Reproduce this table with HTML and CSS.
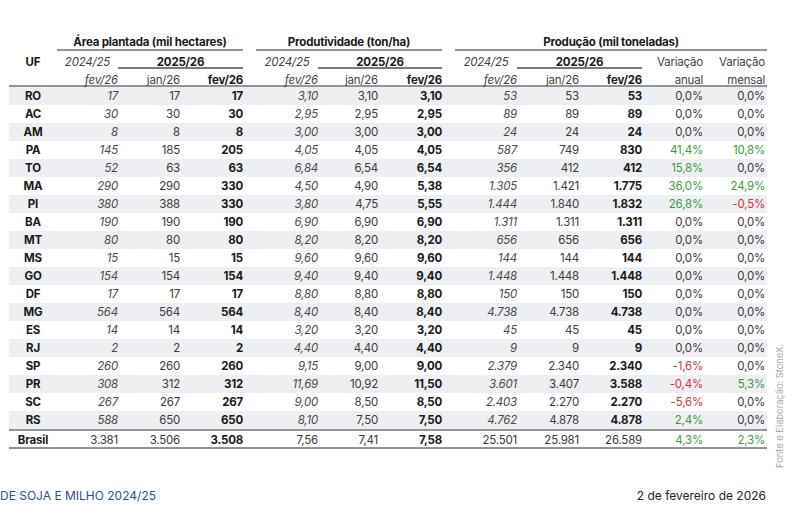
FILE: index.html
```html
<!DOCTYPE html>
<html lang="pt-BR">
<head>
<meta charset="utf-8">
<title>Soja - UF</title>
<link rel="stylesheet" href="styles.css">
</head>
<body>
<div class="page">
  <div class="main">
    <table class="tbl">
      <colgroup>
        <col class="c-uf"><col class="c-a1"><col class="c-a2"><col class="c-a3"><col class="c-gap">
        <col class="c-p1"><col class="c-p2"><col class="c-p3"><col class="c-gap">
        <col class="c-q1"><col class="c-q2"><col class="c-q3"><col class="c-v1"><col class="c-v2">
      </colgroup>
      <thead>
        <tr class="h1">
          <th></th>
          <th colspan="3" class="grp">Área plantada (mil hectares)</th>
          <th></th>
          <th colspan="3" class="grp">Produtividade (ton/ha)</th>
          <th></th>
          <th colspan="5" class="grp">Produção (mil toneladas)</th>
        </tr>
        <tr class="h2">
          <th class="uf">UF</th>
          <th class="it ctr">2024/25</th>
          <th colspan="2" class="yr">2025/26</th>
          <th></th>
          <th class="it ctr">2024/25</th>
          <th colspan="2" class="yr">2025/26</th>
          <th></th>
          <th class="it ctr">2024/25</th>
          <th colspan="2" class="yr">2025/26</th>
          <th class="reg">Variação</th>
          <th class="reg last">Variação</th>
        </tr>
        <tr class="h3">
          <th></th>
          <th class="it">fev/26</th><th class="reg">jan/26</th><th>fev/26</th><th></th>
          <th class="it">fev/26</th><th class="reg">jan/26</th><th>fev/26</th><th></th>
          <th class="it">fev/26</th><th class="reg">jan/26</th><th>fev/26</th>
          <th class="reg">anual</th><th class="reg last">mensal</th>
        </tr>
      </thead>
      <tbody>
        <tr class="s"><td class="uf">RO</td><td class="it">17</td><td>17</td><td class="b">17</td><td></td><td class="it">3,10</td><td>3,10</td><td class="b">3,10</td><td></td><td class="it">53</td><td>53</td><td class="b">53</td><td>0,0%</td><td class="last">0,0%</td></tr>
        <tr><td class="uf">AC</td><td class="it">30</td><td>30</td><td class="b">30</td><td></td><td class="it">2,95</td><td>2,95</td><td class="b">2,95</td><td></td><td class="it">89</td><td>89</td><td class="b">89</td><td>0,0%</td><td class="last">0,0%</td></tr>
        <tr class="s"><td class="uf">AM</td><td class="it">8</td><td>8</td><td class="b">8</td><td></td><td class="it">3,00</td><td>3,00</td><td class="b">3,00</td><td></td><td class="it">24</td><td>24</td><td class="b">24</td><td>0,0%</td><td class="last">0,0%</td></tr>
        <tr><td class="uf">PA</td><td class="it">145</td><td>185</td><td class="b">205</td><td></td><td class="it">4,05</td><td>4,05</td><td class="b">4,05</td><td></td><td class="it">587</td><td>749</td><td class="b">830</td><td class="up">41,4%</td><td class="last up">10,8%</td></tr>
        <tr class="s"><td class="uf">TO</td><td class="it">52</td><td>63</td><td class="b">63</td><td></td><td class="it">6,84</td><td>6,54</td><td class="b">6,54</td><td></td><td class="it">356</td><td>412</td><td class="b">412</td><td class="up">15,8%</td><td class="last">0,0%</td></tr>
        <tr><td class="uf">MA</td><td class="it">290</td><td>290</td><td class="b">330</td><td></td><td class="it">4,50</td><td>4,90</td><td class="b">5,38</td><td></td><td class="it">1.305</td><td>1.421</td><td class="b">1.775</td><td class="up">36,0%</td><td class="last up">24,9%</td></tr>
        <tr class="s"><td class="uf">PI</td><td class="it">380</td><td>388</td><td class="b">330</td><td></td><td class="it">3,80</td><td>4,75</td><td class="b">5,55</td><td></td><td class="it">1.444</td><td>1.840</td><td class="b">1.832</td><td class="up">26,8%</td><td class="last dn">-0,5%</td></tr>
        <tr><td class="uf">BA</td><td class="it">190</td><td>190</td><td class="b">190</td><td></td><td class="it">6,90</td><td>6,90</td><td class="b">6,90</td><td></td><td class="it">1.311</td><td>1.311</td><td class="b">1.311</td><td>0,0%</td><td class="last">0,0%</td></tr>
        <tr class="s"><td class="uf">MT</td><td class="it">80</td><td>80</td><td class="b">80</td><td></td><td class="it">8,20</td><td>8,20</td><td class="b">8,20</td><td></td><td class="it">656</td><td>656</td><td class="b">656</td><td>0,0%</td><td class="last">0,0%</td></tr>
        <tr><td class="uf">MS</td><td class="it">15</td><td>15</td><td class="b">15</td><td></td><td class="it">9,60</td><td>9,60</td><td class="b">9,60</td><td></td><td class="it">144</td><td>144</td><td class="b">144</td><td>0,0%</td><td class="last">0,0%</td></tr>
        <tr class="s"><td class="uf">GO</td><td class="it">154</td><td>154</td><td class="b">154</td><td></td><td class="it">9,40</td><td>9,40</td><td class="b">9,40</td><td></td><td class="it">1.448</td><td>1.448</td><td class="b">1.448</td><td>0,0%</td><td class="last">0,0%</td></tr>
        <tr><td class="uf">DF</td><td class="it">17</td><td>17</td><td class="b">17</td><td></td><td class="it">8,80</td><td>8,80</td><td class="b">8,80</td><td></td><td class="it">150</td><td>150</td><td class="b">150</td><td>0,0%</td><td class="last">0,0%</td></tr>
        <tr class="s"><td class="uf">MG</td><td class="it">564</td><td>564</td><td class="b">564</td><td></td><td class="it">8,40</td><td>8,40</td><td class="b">8,40</td><td></td><td class="it">4.738</td><td>4.738</td><td class="b">4.738</td><td>0,0%</td><td class="last">0,0%</td></tr>
        <tr><td class="uf">ES</td><td class="it">14</td><td>14</td><td class="b">14</td><td></td><td class="it">3,20</td><td>3,20</td><td class="b">3,20</td><td></td><td class="it">45</td><td>45</td><td class="b">45</td><td>0,0%</td><td class="last">0,0%</td></tr>
        <tr class="s"><td class="uf">RJ</td><td class="it">2</td><td>2</td><td class="b">2</td><td></td><td class="it">4,40</td><td>4,40</td><td class="b">4,40</td><td></td><td class="it">9</td><td>9</td><td class="b">9</td><td>0,0%</td><td class="last">0,0%</td></tr>
        <tr><td class="uf">SP</td><td class="it">260</td><td>260</td><td class="b">260</td><td></td><td class="it">9,15</td><td>9,00</td><td class="b">9,00</td><td></td><td class="it">2.379</td><td>2.340</td><td class="b">2.340</td><td class="dn">-1,6%</td><td class="last">0,0%</td></tr>
        <tr class="s"><td class="uf">PR</td><td class="it">308</td><td>312</td><td class="b">312</td><td></td><td class="it">11,69</td><td>10,92</td><td class="b">11,50</td><td></td><td class="it">3.601</td><td>3.407</td><td class="b">3.588</td><td class="dn">-0,4%</td><td class="last up">5,3%</td></tr>
        <tr><td class="uf">SC</td><td class="it">267</td><td>267</td><td class="b">267</td><td></td><td class="it">9,00</td><td>8,50</td><td class="b">8,50</td><td></td><td class="it">2.403</td><td>2.270</td><td class="b">2.270</td><td class="dn">-5,6%</td><td class="last">0,0%</td></tr>
        <tr class="s"><td class="uf">RS</td><td class="it">588</td><td>650</td><td class="b">650</td><td></td><td class="it">8,10</td><td>7,50</td><td class="b">7,50</td><td></td><td class="it">4.762</td><td>4.878</td><td class="b">4.878</td><td class="up">2,4%</td><td class="last">0,0%</td></tr>
        <tr class="total"><td class="uf">Brasil</td><td>3.381</td><td>3.506</td><td class="b">3.508</td><td></td><td>7,56</td><td>7,41</td><td class="b">7,58</td><td></td><td>25.501</td><td>25.981</td><td>26.589</td><td class="up">4,3%</td><td class="last up">2,3%</td></tr>
      </tbody>
    </table>
    <div class="footer">
      <span class="doc">DE SOJA E MILHO 2024/25</span>
      <span class="date">2 de fevereiro de 2026</span>
    </div>
  </div>
  <div class="note">Fonte e Elaboração: StoneX.</div>
</div>
</body>
</html>
```

FILE: styles.css
```css
* { box-sizing: border-box; }
html, body { margin: 0; padding: 0; background: #fff; }
body {
  font-family: Inter, "Helvetica Neue", "Liberation Sans", Arial, sans-serif;
  color: #222;
  overflow: hidden;
}
.page {
  display: flex;
  height: 506px;
  padding: 33px 0 0 9px;
}
.main { width: 758px; flex: none; }
.tbl {
  width: 758px;
  table-layout: fixed;
  border-collapse: collapse;
  border-spacing: 0;
  font-size: 11.5px;
  letter-spacing: -0.2px;
}
.c-uf { width: 48px; }
.c-a1 { width: 61px; }
.c-a2 { width: 62px; }
.c-a3 { width: 63px; }
.c-gap { width: 13px; }
.c-p1 { width: 62px; }
.c-p2 { width: 60px; }
.c-p3 { width: 64px; }
.c-q1 { width: 62px; }
.c-q2 { width: 62px; }
.c-q3 { width: 63px; }
.c-v1 { width: 61px; }
.c-v2 { width: 64px; }

.tbl th, .tbl td {
  padding: 0;
  text-align: right;
  white-space: nowrap;
  line-height: 14px;
}
.tbl th { font-weight: 700; color: #1a1a1a; }
.tbl th.reg { font-weight: 400; color: #444; }
.tbl th.it { font-weight: 400; font-style: italic; color: #444; }
.tbl th.ctr { text-align: center; }
.tbl .last { padding-right: 2px; }

.h1 th { height: 18px; vertical-align: bottom; padding-bottom: 2px; }
.h1 th.grp { text-align: center; box-shadow: inset 0 -2px 0 #959595; }
.h2 th { height: 18px; vertical-align: bottom; padding-bottom: 0; line-height: 14px; }
.h2 th.yr { text-align: center; box-shadow: inset 0 -2px 0 #7a7a7a; }
.h2 th.uf { text-align: center; }
.h3 th { height: 18px; vertical-align: bottom; padding-bottom: 0; line-height: 13px; box-shadow: inset 0 -2px 0 #959595; }

.tbl td {
  height: 18px;
  vertical-align: middle;
  color: #3a3a3a;
  font-weight: 400;
}
.tbl tr.s td { background: #edeff3; }
.tbl td.uf { text-align: center; font-weight: 700; color: #1a1a1a; }
.tbl td.it { font-style: italic; color: #4a4a4a; }
.tbl td.b { font-weight: 700; color: #1a1a1a; }
.tbl td.up { color: #3f9a3c; }
.tbl td.dn { color: #d8343c; }
.tbl tr.total td {
  height: 20px;
  padding-top: 1px;
  box-shadow: inset 0 2px 0 #959595, inset 0 -2px 0 #959595;
}

.footer {
  display: flex;
  justify-content: space-between;
  align-items: center;
  margin-top: 39px;
  margin-left: -9px;
  padding-right: 1px;
  font-size: 12px;
  line-height: 16px;
}
.doc { color: #2d4f8e; }
.date { color: #222; }

.note {
  flex: none;
  align-self: flex-end;
  margin-left: 7px;
  margin-bottom: 38px;
  writing-mode: vertical-rl;
  transform: rotate(180deg);
  font-size: 9.3px;
  line-height: 12px;
  color: #a5a5a5;
  white-space: nowrap;
}
```
